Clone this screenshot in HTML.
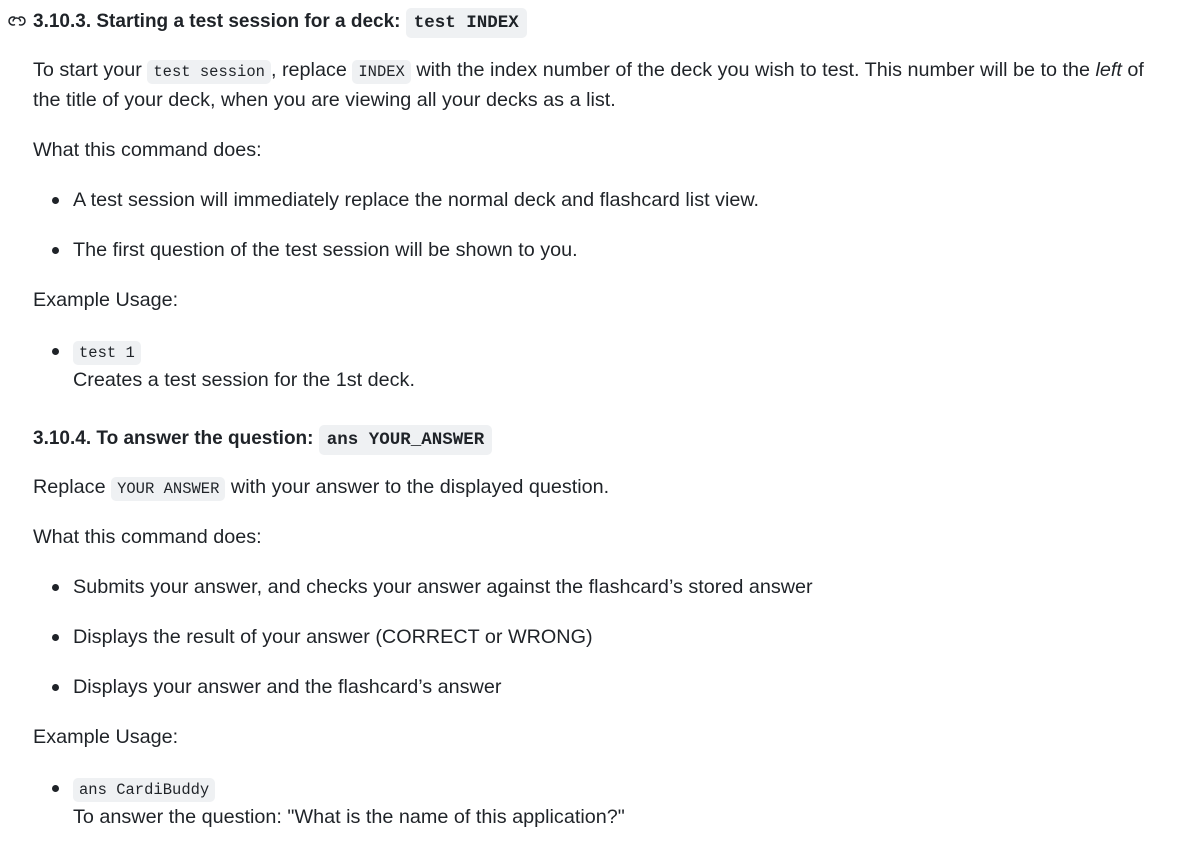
<!DOCTYPE html>
<html><head><meta charset="utf-8"><style>
html,body{margin:0;padding:0;background:#fff;width:1198px;height:853px;overflow:hidden}
body{font-family:"Liberation Sans","DejaVu Sans",sans-serif;color:#1f2328;font-size:19.8px;position:relative}
.l{position:absolute;white-space:nowrap;line-height:30px}
code{font-family:"Liberation Mono","DejaVu Sans Mono",monospace;font-size:15.5px;background:#eff1f3;border-radius:5px;padding:3px 6px}
h{font-weight:bold;font-size:19px}
h code{font-size:17.5px;font-weight:bold;padding:5px 8px}
.b{position:absolute;width:7px;height:7px;border-radius:50%;background:#1f2328}
</style></head><body>
<svg style="position:absolute;left:7px;top:13px" width="20" height="16" viewBox="0 0 20 16" fill="none" stroke="#1f2328" stroke-width="1.5"><path d="M8 4.5 A4 4 0 1 0 8 11.5"/><path d="M6 8.5 A3.5 3.5 0 0 1 10 5 A3.5 3.5 0 0 1 13.5 8.5"/><path d="M12 4.5 A4 4 0 1 1 12 11.5"/></svg>
<div class="l" style="left:33px;top:6px"><h>3.10.3. Starting a test session for a deck: <code>test INDEX</code></h></div>
<div class="l" style="left:33px;top:55px">To start your <code>test session</code>, replace <code>INDEX</code> with the index number of the deck you wish to test. This number will be to the <i>left</i> of</div>
<div class="l" style="left:33px;top:85px">the title of your deck, when you are viewing all your decks as a list.</div>
<div class="l" style="left:33px;top:135px">What this command does:</div>
<div class="b" style="left:52px;top:197px"></div><div class="l" style="left:73px;top:185px">A test session will immediately replace the normal deck and flashcard list view.</div>
<div class="b" style="left:52px;top:247px"></div><div class="l" style="left:73px;top:235px">The first question of the test session will be shown to you.</div>
<div class="l" style="left:33px;top:285px">Example Usage:</div>
<div class="b" style="left:52px;top:348px"></div><div class="l" style="left:73px;top:336px"><code>test 1</code></div>
<div class="l" style="left:73px;top:365px">Creates a test session for the 1st deck.</div>
<div class="l" style="left:33px;top:423px"><h>3.10.4. To answer the question: <code>ans YOUR_ANSWER</code></h></div>
<div class="l" style="left:33px;top:472px">Replace <code>YOUR ANSWER</code> with your answer to the displayed question.</div>
<div class="l" style="left:33px;top:522px">What this command does:</div>
<div class="b" style="left:52px;top:584px"></div><div class="l" style="left:73px;top:572px">Submits your answer, and checks your answer against the flashcard’s stored answer</div>
<div class="b" style="left:52px;top:634px"></div><div class="l" style="left:73px;top:622px">Displays the result of your answer (CORRECT or WRONG)</div>
<div class="b" style="left:52px;top:684px"></div><div class="l" style="left:73px;top:672px">Displays your answer and the flashcard’s answer</div>
<div class="l" style="left:33px;top:722px">Example Usage:</div>
<div class="b" style="left:52px;top:785px"></div><div class="l" style="left:73px;top:773px"><code>ans CardiBuddy</code></div>
<div class="l" style="left:73px;top:802px">To answer the question: "What is the name of this application?"</div>
</body></html>
